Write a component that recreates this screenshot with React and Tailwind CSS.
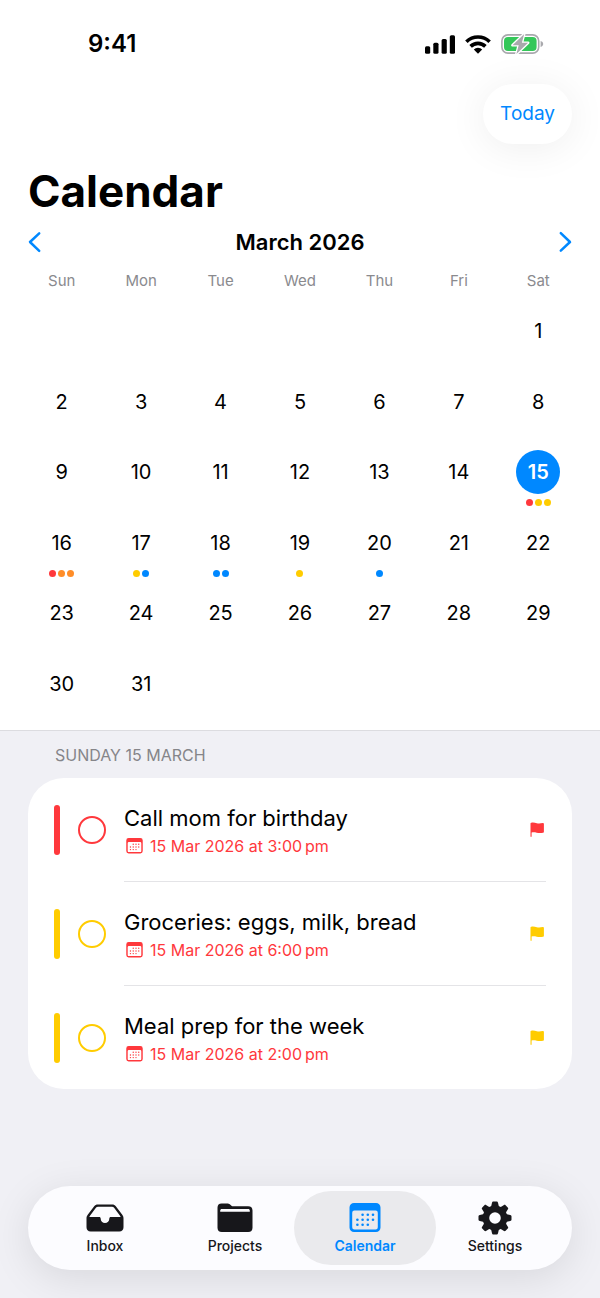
import React, { useState } from 'react';

const weekdays = ['Sun', 'Mon', 'Tue', 'Wed', 'Thu', 'Fri', 'Sat'];

const days = Array.from({ length: 31 }, (_, i) => i + 1);

const dayDots = {
  15: ['bg-[#ff383c]', 'bg-[#ffcc00]', 'bg-[#ffcc00]'],
  16: ['bg-[#ff383c]', 'bg-[#ff8d28]', 'bg-[#ff8d28]'],
  17: ['bg-[#ffcc00]', 'bg-[#0088ff]'],
  18: ['bg-[#0088ff]', 'bg-[#0088ff]'],
  19: ['bg-[#ffcc00]'],
  20: ['bg-[#0088ff]'],
};

const tasks = [
  { title: 'Call mom for birthday', due: '15 Mar 2026 at 3:00\u202fpm', bar: 'bg-[#ff383c]', ring: 'border-[#ff383c] checked:bg-[#ff383c]', flag: 'text-[#ff383c]' },
  { title: 'Groceries: eggs, milk, bread', due: '15 Mar 2026 at 6:00\u202fpm', bar: 'bg-[#ffcc00]', ring: 'border-[#ffcc00] checked:bg-[#ffcc00]', flag: 'text-[#ffcc00]' },
  { title: 'Meal prep for the week', due: '15 Mar 2026 at 2:00\u202fpm', bar: 'bg-[#ffcc00]', ring: 'border-[#ffcc00] checked:bg-[#ffcc00]', flag: 'text-[#ffcc00]' },
];

const SignalIcon = () => (
  <svg width="30" height="19" viewBox="0 0 30 19" fill="currentColor" aria-hidden="true">
    <rect x="0" y="11.2" width="5.2" height="7.6" rx="1.5" />
    <rect x="8.3" y="7.8" width="5.2" height="11" rx="1.5" />
    <rect x="16.6" y="4" width="5.2" height="14.8" rx="1.5" />
    <rect x="24.8" y="0.2" width="5.2" height="18.6" rx="1.5" />
  </svg>
);

const WifiIcon = () => (
  <svg width="26" height="19" viewBox="0 0 26 19" fill="none" stroke="currentColor" strokeWidth="3.6" aria-hidden="true">
    <path d="M1.4 6.8a16.6 16.6 0 0 1 23.2 0" />
    <path d="M5.6 11.4a10.6 10.6 0 0 1 14.8 0" />
    <path d="M13 18.8l-4.200-4.300a5.900 5.900 0 0 1 8.400 0z" fill="currentColor" stroke="none" />
  </svg>
);

const BatteryIcon = () => (
  <svg width="43" height="22" viewBox="0 0 43 22" aria-hidden="true">
    <rect x="0.9" y="1.9" width="36.8" height="18.2" rx="6" fill="none" stroke="#a9a9ad" strokeWidth="1.6" />
    <rect x="3" y="4" width="32.6" height="14" rx="4" fill="#34c759" />
    <path d="M39.6 8v6c1.6-.4 2.6-1.6 2.6-3s-1-2.6-2.6-3z" fill="#a9a9ad" />
    <path d="M23.2 1L11.500 12.300h6.200L15.400 21 27.100 9.700h-6.200z" fill="#a9a9ad" stroke="#fff" strokeWidth="2.6" strokeLinejoin="round" paintOrder="stroke" />
  </svg>
);

const ChevronIcon = ({ className }) => (
  <svg width="14" height="22" viewBox="0 0 14 22" fill="none" stroke="currentColor" strokeWidth="2.5" strokeLinecap="round" strokeLinejoin="round" className={className} aria-hidden="true">
    <path d="M11.200 2.400L2 11l9.200 8.800" />
  </svg>
);

const FlagIcon = ({ className }) => (
  <svg width="16" height="16" viewBox="0 0 16 16" fill="currentColor" className={className} aria-hidden="true">
    <path d="M.5 1.600c0-.5.300-.8.700-.9 2.300-.5 3.800.1 5.600.5 1.900.5 3.600.3 6-.1.700-.1 1.100.2 1.100.8v7.800c0 .6-.3.900-.8 1-2.500.6-4.400.5-6.400 0-1.800-.4-3.300-.6-5.100-.2v3.800c0 .4-.2.600-.55.600s-.55-.2-.55-.6z" />
  </svg>
);

const CalendarIcon = ({ className }) => (
  <svg viewBox="0 0 32 30" fill="currentColor" className={className} aria-hidden="true">
    <path fillRule="evenodd" d="M5 0h22a4.500 4.500 0 0 1 4.500 4.500v20A4.500 4.500 0 0 1 27 29H5a4.500 4.500 0 0 1-4.500-4.500v-20A4.500 4.500 0 0 1 5 0zm.4 7.600A2.200 2.200 0 0 0 3.200 9.800v14.400a2.200 2.200 0 0 0 2.200 2.200h21.200a2.200 2.200 0 0 0 2.200-2.200V9.800a2.200 2.200 0 0 0-2.200-2.200z" />
    <circle cx="13.600" cy="11.800" r="1.300" />
    <circle cx="18.800" cy="11.800" r="1.300" />
    <circle cx="24" cy="11.800" r="1.300" />
    <circle cx="8.400" cy="16.800" r="1.300" />
    <circle cx="13.600" cy="16.800" r="1.300" />
    <circle cx="18.800" cy="16.800" r="1.300" />
    <circle cx="24" cy="16.800" r="1.300" />
    <circle cx="8.400" cy="21.800" r="1.300" />
    <circle cx="13.600" cy="21.800" r="1.300" />
    <circle cx="18.800" cy="21.800" r="1.300" />
  </svg>
);

const InboxIcon = () => (
  <svg width="38" height="28" viewBox="0 0 38 28" fill="currentColor" aria-hidden="true">
    <path fillRule="evenodd" d="M11.8.5h14.400c1.500 0 2.700.6 3.600 1.800l6.300 8.300c.9 1.200 1.400 2.300 1.400 3.800v8.900c0 2.700-1.500 4.200-4.200 4.200H4.700C2 27.500.5 26 .5 23.300v-8.900c0-1.500.5-2.600 1.400-3.800l6.300-8.300C9.100 1.100 10.300.5 11.800.5zm.2 2.200c-.8 0-1.400.3-1.900.9L3.600 12.300c-.3.500-.1.800.4.800h9.100c1 0 1.600.7 1.600 1.600 0 2.400 1.800 4.300 4.300 4.300s4.300-1.900 4.300-4.300c0-.9.6-1.600 1.600-1.600H34c.5 0 .7-.3.400-.8l-6.500-8.700c-.5-.6-1.100-.9-1.900-.9z" />
  </svg>
);

const FolderIcon = () => (
  <svg width="36" height="30" viewBox="0 0 36 30" fill="currentColor" aria-hidden="true">
    <path fillRule="evenodd" d="M4.600.5h5.300c1.300 0 2.200.3 3.200 1.100l1 .8c.8.600 1.400.8 2.400.8h14.600c2.900 0 4.400 1.500 4.400 4.300v17.200c0 2.800-1.500 4.300-4.300 4.300H4.800C2 29 .5 27.500.5 24.700V4.800C.5 2 1.900.5 4.600.5zM5 6.100c-1.200 0-1.800.6-1.800 1.600v1h29.600v-1c0-1-.6-1.600-1.700-1.600z" />
  </svg>
);

const GearIcon = () => (
  <svg width="34" height="34" viewBox="-17 -17 34 34" fill="currentColor" aria-hidden="true">
    {[0, 45, 90, 135, 180, 225, 270, 315].map((angle) => (
      <path key={angle} transform={`rotate(${angle})`} d="M-4-11l1-4.200c.2-.9.700-1.300 1.500-1.300h3c.8 0 1.300.4 1.500 1.300L4-11z" />
    ))}
    <circle r="9.100" fill="none" stroke="currentColor" strokeWidth="6.600" />
  </svg>
);

const tabs = [
  { name: 'Inbox', icon: <InboxIcon /> },
  { name: 'Projects', icon: <FolderIcon /> },
  { name: 'Calendar', icon: <CalendarIcon className="w-8 h-[30px]" /> },
  { name: 'Settings', icon: <GearIcon /> },
];

const StatusBar = () => (
  <div className="flex items-center justify-between h-[84px] pt-1 pl-[88px] pr-14">
    <p className="font-semibold text-2xl leading-7">9:41</p>
    <div className="flex items-center gap-[10px]">
      <SignalIcon />
      <WifiIcon />
      <BatteryIcon />
    </div>
  </div>
);

const MonthGrid = ({ selected, onSelect }) => (
  <div className="px-[22px] pb-3">
    <div className="grid grid-cols-7 text-center text-[15px] leading-5 text-[#8a8a8e]">
      {weekdays.map((name) => <span key={name}>{name}</span>)}
    </div>
    <div className="grid grid-cols-7 content-between h-[409px] mt-[18px]">
      {days.map((day) => (
        <button
          key={day}
          type="button"
          onClick={() => onSelect(day)}
          className={`flex flex-col items-center ${day === 1 ? 'col-start-7' : ''}`}
        >
          <span className={`flex items-center justify-center size-11 rounded-full text-xl ${day === selected ? 'bg-[#0088ff] text-white font-semibold' : ''}`}>
            {day}
          </span>
          <span className="flex gap-[2px] h-[7px] mt-[5px]">
            {(dayDots[day] || []).map((color, i) => <i key={i} className={`size-[7px] rounded-full ${color}`} />)}
          </span>
        </button>
      ))}
    </div>
  </div>
);

const TaskRow = ({ task, id }) => (
  <li className="group flex items-center px-[26px]">
    <span className={`w-[6px] h-[50px] rounded-full ${task.bar}`} />
    <input id={id} type="checkbox" className={`appearance-none size-7 ml-[18px] rounded-full border-2 ${task.ring}`} />
    <div className="flex flex-1 items-center h-[104px] ml-[18px] border-b border-[#e4e4e7] group-last:border-b-0 group-last:h-[103px]">
      <div className="flex-1 pt-[2px]">
        <label htmlFor={id} className="block text-[22px] leading-7">{task.title}</label>
        <p className="flex items-center gap-[7px] mt-[2px] text-base leading-6 text-[#ff383c]">
          <CalendarIcon className="w-[17px] h-4 ml-[2px]" />
          {task.due}
        </p>
      </div>
      <FlagIcon className={task.flag} />
    </div>
  </li>
);

const App = () => {
  const [selected, setSelected] = useState(15);
  const [activeTab, setActiveTab] = useState('Calendar');

  return (
    <div className="min-h-screen flex flex-col bg-[#f0f0f5] text-black font-['Inter','Liberation_Sans',sans-serif]">
      <header className="bg-white border-b border-[#dcdce0]">
        <StatusBar />

        <div className="flex justify-end px-7">
          <button
            type="button"
            onClick={() => setSelected(15)}
            className="h-[60px] px-[17px] rounded-full bg-white text-[19px] text-[#0088ff] shadow-[0_4px_40px_rgba(0,0,0,0.07)]"
          >Today
          </button>
        </div>

        <h1 className="px-7 mt-5 font-bold text-[44px] leading-[54px]">Calendar</h1>

        <div className="flex items-center justify-between px-7 mt-[10px] mb-[15px]">
          <button type="button" aria-label="Previous month" className="text-[#0088ff]"><ChevronIcon /></button>
          <h2 className="font-semibold text-[22px] leading-7">March 2026</h2>
          <button type="button" aria-label="Next month" className="text-[#0088ff]"><ChevronIcon className="rotate-180" /></button>
        </div>

        <MonthGrid selected={selected} onSelect={setSelected} />
      </header>

      <main className="px-7 pb-24">
        <h3 className="pl-[27px] mt-3 text-base leading-6 text-[#858589]">SUNDAY 15 MARCH</h3>
        <ul className="mt-[11px] rounded-[36px] bg-white">
          {tasks.map((task, i) => <TaskRow key={task.title} task={task} id={`task-${i}`} />)}
        </ul>
      </main>

      <nav className="sticky bottom-7 flex mt-auto mb-7 mx-7 px-3 h-[84px] rounded-full bg-[#fcfcff] shadow-[0_8px_40px_rgba(0,0,0,0.1)]">
        {tabs.map(({ name, icon }) => (
          <button
            key={name}
            type="button"
            onClick={() => setActiveTab(name)}
            className={`flex flex-1 flex-col items-center my-[5px] -mx-[6px] pt-[9px] rounded-full text-sm leading-5 ${name === activeTab ? 'bg-[#eaeaed] text-[#0088ff] font-semibold' : 'text-[#17171b] font-medium'}`}
          >
            <span className="flex items-center justify-center h-[36px]">{icon}</span>
            {name}
          </button>
        ))}
      </nav>
    </div>
  );
};

export default App;
